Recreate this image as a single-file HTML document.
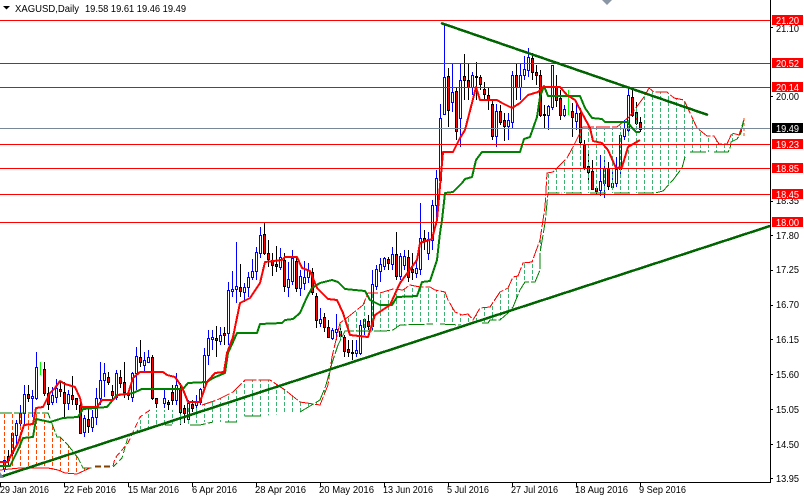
<!DOCTYPE html>
<html><head><meta charset="utf-8"><title>XAGUSD</title>
<style>
html,body{margin:0;padding:0;background:#fff;width:804px;height:497px;overflow:hidden}
svg{display:block}
text{font-family:"Liberation Sans",sans-serif;font-size:10.5px;fill:#000}
</style></head><body>
<svg width="804" height="497" viewBox="0 0 804 497" xmlns="http://www.w3.org/2000/svg">
<defs>
<pattern id="gp" width="8" height="6" patternUnits="userSpaceOnUse" x="4" y="0"><rect x="0" y="0" width="1" height="4" fill="#3cb371"/></pattern>
<pattern id="op" width="8" height="6" patternUnits="userSpaceOnUse" x="4" y="0"><rect x="0" y="0" width="1" height="4" fill="#ff4500"/></pattern>
</defs>
<rect width="804" height="497" fill="#fff"/>

<!-- wicks -->
<path fill="none" stroke="#00f" d="M4.5 456V472M12.5 432V458M16.5 420V446M20.5 405V430M24.5 385V425M32.5 390V417M36.5 352V400M52.5 387V405M56.5 379V403M68.5 390V410M84.5 415V437M92.5 410V432M96.5 388V425M100.5 362V405M104.5 363V397M116.5 370V400M132.5 372V402M136.5 347V390M144.5 352V372M148.5 350V363M164.5 388V408M176.5 373V405M188.5 400V420M196.5 395V410M200.5 388V405M204.5 348V390M208.5 330V365M212.5 330V350M220.5 327V345M228.5 282V345M232.5 271V297M236.5 242V303M244.5 283V302M248.5 272V297M252.5 259V280M256.5 247V280M260.5 227V258M280.5 248V270M288.5 262V297M292.5 250V285M300.5 270V296M304.5 261V290M308.5 263V283M320.5 308V327M332.5 328V340M336.5 314V340M356.5 340V357M360.5 320V355M364.5 319V335M372.5 270V330M376.5 265V290M380.5 258V282M384.5 257V270M392.5 247V270M400.5 253V280M404.5 250V270M416.5 260V278M420.5 203V275M428.5 232V260M432.5 200V250M436.5 170V220M440.5 104V185M444.5 24V115M452.5 63V112M460.5 63V147M472.5 72V95M496.5 104V147M508.5 113V140M512.5 71V128M520.5 63V100M524.5 56V80M528.5 48V77M548.5 105V130M552.5 65V110M564.5 105V117M576.5 103V130M600.5 155V196M604.5 158V198M612.5 170V190M616.5 157V187M620.5 135V175M624.5 120V140M628.5 89V135"/>
<path fill="none" stroke="#000" d="M8.5 450V465M28.5 385V402M44.5 362V396M48.5 387V410M60.5 382V397M64.5 382V418M72.5 376V405M76.5 398V410M80.5 400V434M88.5 409V433M108.5 372V385M112.5 385V400M120.5 370V388M124.5 362V398M128.5 390V400M140.5 340V367M152.5 355V400M156.5 398V408M168.5 400V410M172.5 385V405M180.5 383V425M184.5 405V423M192.5 400V412M216.5 326V357M224.5 327V345M240.5 264V297M264.5 223V255M268.5 240V267M272.5 253V276M276.5 246V272M284.5 253V292M296.5 257V292M312.5 268V295M316.5 293V328M324.5 313V332M328.5 320V338M340.5 325V340M344.5 335V357M348.5 340V357M352.5 340V360M368.5 315V330M388.5 257V270M396.5 232V280M408.5 250V282M412.5 253V280M424.5 230V250M448.5 68V127M456.5 87V140M464.5 54V100M468.5 63V100M476.5 62V100M480.5 75V90M484.5 82V100M488.5 88V110M492.5 100V140M500.5 105V125M504.5 113V141M516.5 63V100M532.5 53V80M536.5 65V85M540.5 70V117M544.5 105V128M556.5 75V107M560.5 90V120M572.5 103V137M580.5 108V145M584.5 140V170M588.5 152V180M592.5 160V190M596.5 188V195M608.5 162V190M632.5 88V117M636.5 102V125M640.5 117V132"/>
<path fill="none" stroke="#0f0" d="M40.5 362V375M568.5 90V115"/>
<!-- up bodies -->
<path fill="#fff" stroke="#00f" d="M3.500 460.5h2V468.5h-2zM11.5 433.5h2V453.5h-2zM15.5 423.5h2V435.5h-2zM19.5 413.5h2V423.5h-2zM23.5 394.5h2V413.5h-2zM31.5 396.5h2V398.5h-2zM35.5 367.5h2V398.5h-2zM51.5 395.5h2V402.5h-2zM55.5 388.5h2V397.5h-2zM67.5 394.5h2V403.5h-2zM83.5 418.5h2V432.5h-2zM91.5 417.5h2V427.5h-2zM95.5 398.5h2V417.5h-2zM99.5 380.5h2V398.5h-2zM103.5 373.5h2V380.5h-2zM115.5 373.5h2V397.5h-2zM131.5 373.5h2V397.5h-2zM135.5 356.5h2V373.5h-2zM143.5 360.5h2V365.5h-2zM147.5 357.5h2V362.5h-2zM163.5 398.5h2V403.5h-2zM175.5 385.5h2V400.5h-2zM187.5 403.5h2V419.5h-2zM195.5 402.5h2V405.5h-2zM199.5 389.5h2V402.5h-2zM203.5 355.5h2V387.5h-2zM207.5 338.5h2V355.5h-2zM211.5 337.5h2V339.5h-2zM219.5 335.5h2V341.5h-2zM227.5 290.5h2V333.5h-2zM231.5 289.5h2V291.5h-2zM235.5 286.5h2V289.5h-2zM243.5 287.5h2V292.5h-2zM247.5 277.5h2V287.5h-2zM251.5 271.5h2V277.5h-2zM255.5 252.5h2V271.5h-2zM259.5 235.5h2V253.5h-2zM279.5 257.5h2V267.5h-2zM287.5 279.5h2V287.5h-2zM291.5 258.5h2V281.5h-2zM299.5 276.5h2V288.5h-2zM303.5 277.5h2V283.5h-2zM307.5 270.5h2V277.5h-2zM319.5 319.5h2V323.5h-2zM331.5 330.5h2V338.5h-2zM335.5 329.5h2V332.5h-2zM355.5 350.5h2V353.5h-2zM359.5 325.5h2V353.5h-2zM363.5 319.5h2V327.5h-2zM371.5 284.5h2V326.5h-2zM375.5 269.5h2V286.5h-2zM379.5 264.5h2V271.5h-2zM383.5 258.5h2V266.5h-2zM391.5 254.5h2V264.5h-2zM399.5 256.5h2V276.5h-2zM403.5 256.5h2V265.5h-2zM415.5 268.5h2V273.5h-2zM419.5 238.5h2V269.5h-2zM427.5 239.5h2V253.5h-2zM431.5 205.5h2V240.5h-2zM435.5 178.5h2V205.5h-2zM439.5 118.5h2V180.5h-2zM443.5 77.5h2V114.5h-2zM451.5 92.5h2V102.5h-2zM459.5 80.5h2V118.5h-2zM471.5 75.5h2V87.5h-2zM495.5 111.5h2V136.5h-2zM507.5 120.5h2V126.5h-2zM511.5 75.5h2V122.5h-2zM519.5 75.5h2V87.5h-2zM523.5 69.5h2V75.5h-2zM527.5 57.5h2V70.5h-2zM547.5 106.5h2V115.5h-2zM551.5 65.5h2V107.5h-2zM563.5 109.5h2V115.5h-2zM575.5 113.5h2V121.5h-2zM599.5 181.5h2V190.5h-2zM603.5 169.5h2V183.5h-2zM611.5 183.5h2V187.5h-2zM615.5 169.5h2V183.5h-2zM619.5 135.5h2V169.5h-2zM623.5 128.5h2V136.5h-2zM627.5 95.5h2V130.5h-2z"/>
<!-- down bodies -->
<path fill="#f00" stroke="#000" d="M7.5 456.5h2V460.5h-2zM27.5 394.5h2V398.5h-2zM43.5 369.5h2V393.5h-2zM47.5 393.5h2V404.5h-2zM59.5 389.5h2V391.5h-2zM63.5 392.5h2V403.5h-2zM71.5 395.5h2V399.5h-2zM75.5 398.5h2V404.5h-2zM79.5 405.5h2V433.5h-2zM87.5 419.5h2V426.5h-2zM107.5 377.5h2V382.5h-2zM111.5 391.5h2V395.5h-2zM119.5 377.5h2V383.5h-2zM123.5 382.5h2V392.5h-2zM127.5 393.5h2V395.5h-2zM139.5 357.5h2V362.5h-2zM151.5 357.5h2V398.5h-2zM155.5 398.5h2V403.5h-2zM167.5 402.5h2V404.5h-2zM171.5 392.5h2V400.5h-2zM179.5 388.5h2V412.5h-2zM183.5 408.5h2V413.5h-2zM191.5 404.5h2V408.5h-2zM215.5 338.5h2V340.5h-2zM223.5 333.5h2V335.5h-2zM239.5 287.5h2V291.5h-2zM263.5 234.5h2V253.5h-2zM267.5 253.5h2V259.5h-2zM271.5 260.5h2V265.5h-2zM275.5 264.5h2V266.5h-2zM283.5 260.5h2V286.5h-2zM295.5 261.5h2V288.5h-2zM311.5 272.5h2V292.5h-2zM315.5 296.5h2V320.5h-2zM323.5 317.5h2V327.5h-2zM327.5 327.5h2V337.5h-2zM339.5 331.5h2V336.5h-2zM343.5 337.5h2V351.5h-2zM347.5 349.5h2V352.5h-2zM351.5 352.5h2V353.5h-2zM367.5 321.5h2V326.5h-2zM387.5 259.5h2V263.5h-2zM395.5 254.5h2V276.5h-2zM407.5 257.5h2V277.5h-2zM411.5 269.5h2V272.5h-2zM423.5 238.5h2V241.5h-2zM447.5 76.5h2V110.5h-2zM455.5 91.5h2V131.5h-2zM463.5 76.5h2V80.5h-2zM467.5 80.5h2V87.5h-2zM475.5 76.5h2V77.5h-2zM479.5 77.5h2V84.5h-2zM483.5 89.5h2V94.5h-2zM487.5 95.5h2V100.5h-2zM491.5 104.5h2V136.5h-2zM499.5 111.5h2V122.5h-2zM503.5 120.5h2V126.5h-2zM515.5 75.5h2V87.5h-2zM531.5 58.5h2V72.5h-2zM535.5 72.5h2V75.5h-2zM539.5 75.5h2V115.5h-2zM543.5 114.5h2V115.5h-2zM555.5 87.5h2V100.5h-2zM559.5 98.5h2V115.5h-2zM571.5 111.5h2V117.5h-2zM579.5 113.5h2V142.5h-2zM583.5 145.5h2V167.5h-2zM587.5 166.5h2V172.5h-2zM591.5 171.5h2V189.5h-2zM595.5 188.5h2V191.5h-2zM607.5 168.5h2V186.5h-2zM631.5 97.5h2V115.5h-2zM635.5 112.5h2V123.5h-2zM639.5 122.5h2V129.5h-2z"/>

<!-- cloud fills -->
<path fill="url(#op)" d="M0 413L42 413L48 413L57 437L60 437L68 445L78 458L83 468L92 468L90 468L77 474L65 473L58 470L48 469L42 468L20 468L0 470Z"/>
<path fill="url(#gp)" d="M115 458L128 443L140 417L150 410L178 410L202 405L217 400L233 392L245 380L270 380L285 390L300 402L320 405L328 385L332 363L332 363L326 385L320 400L300 412L263 416L245 416L237 422L200 422L190 425L165 425L138 430L128 437L122 458Z"/>
<path fill="url(#gp)" d="M332 357L340 323L348 317L363 305L368 293L380 293L393 289L403 290L410 285L420 287L430 287L435 290L445 292L448 300L455 312L462 315L468 314L473 320L480 308L490 307L500 292L508 288L513 277L518 276L523 263L532 262L540 240L545 207L547 193L548 197L545 223L540 253L540 270L535 282L525 282L520 290L513 307L508 313L500 320L490 320L488 323L460 325L433 324L400 325L393 330L385 331L345 331L338 345Z"/>
<path fill="url(#gp)" d="M547 173L553 172L558 167L567 158L573 147L583 127L604 128L617 128L629 117L644 97L649 88L654 92L667 92L674 98L684 100L691 115L697 128L707 136L714 136L719 144L727 144L732 133L739 135L744 120L741 133L737 139L731 142L730 149L728 152L690 152L685 157L682 168L673 180L663 191L655 193L548 193Z"/>

<!-- senkou lines -->
<g fill="none" stroke-width="1" shape-rendering="crispEdges">
<path stroke="#008000" d="M0 413H48L57 437L60 437L68 445L78 458L83 468L92 468" stroke-dasharray="12 2"/>
<path stroke="#f00" d="M0 470L20 468H48L58 470L65 473L77 474L90 468"/>
<path stroke="#f00" d="M95 466H113L115 458L128 443L140 417L150 410" stroke-dasharray="6 3"/>
<path stroke="#008000" d="M95 467H113L122 458L128 437L138 430" stroke-dasharray="6 3"/>
<path stroke="#f00" d="M150 410M202 405L217 400L233 392L245 380H270L285 390L300 402L320 405L328 385L332 357L340 323L348 317L363 305L368 293H380L393 289L403 290L410 285L420 287H430L435 290L445 292L448 300L455 312L462 315L468 314L473 320L480 308L490 307L500 292L508 288L513 277L518 276L523 263L532 262L540 240L545 207L547 173L553 172L558 167L567 158L573 147L583 127H617L629 117L644 97L649 88L654 92H667L674 98L684 100L691 115L697 128L707 136H714L719 144H727L732 133L739 135L744 120" stroke-dasharray="14 2"/>
<path stroke="#008000" d="M165 425H172M190 425H200L213 422M225 422H237M245 416H263M300 412L320 400L326 385L332 363L338 345L345 331H385L393 330L400 325L433 324M440 324L460 325M482 323L488 323L490 320H500L508 313L513 307L520 290L525 282H535L540 270L540 253L545 223L548 193H562M566 193H584M590 193H608M614 193H632M638 193H655L663 191L673 180L682 168L685 157M690 152H708M714 152H728L730 149L731 142L737 139L741 133L744 118" stroke-dasharray="16 2"/>
<path stroke="#ff4500" d="M744 118V136" stroke-dasharray="3 2"/>
</g>

<!-- horizontal levels -->
<path stroke="#778899" fill="none" d="M0 128.5H770"/>
<path stroke="#f00" fill="none" d="M0 20.5H770M0 63.5H770M0 87.5H770M0 144.5H770M0 168.5H770M0 194.5H770M0 222.5H770"/>

<!-- kijun / tenkan -->
<g fill="none" shape-rendering="crispEdges" stroke-linejoin="round">
<path stroke="#008000" stroke-width="2" d="M0 466L10 466L18 450L23 438L33 437L36 419L50 422L63 418L78 417L83 409L107 407L117 395L133 393L142 389L183 389L188 383L207 382L213 378L225 373L228 353L233 342L237 333L257 333L260 324L282 323L285 320L293 319L300 313L307 297L312 288L320 283L332 280L338 282L345 289L365 291L370 300L380 305L392 305L397 297L417 296L422 282L430 281L437 260L440 233L442 220L445 193L453 192L462 183L465 179L472 177L476 160L482 152L520 152L524 139L530 137L537 117L540 97L544 86L548 96L580 96L585 108L592 118L602 119L605 122L627 122L636 132L640 132"/>
<path stroke="#f00" stroke-width="2" d="M0 462L8 462L10 457L13 452L18 443L24 425L33 424L36 408L43 407L50 393L55 388L60 381L65 384L75 387L80 398L82 407L97 407L102 400L113 400L118 395L128 394L133 378L140 372L163 372L167 375L175 377L182 387L188 402L200 402L207 382L215 373L224 372L227 353L233 337L240 303L250 298L260 283L265 262L282 260L285 257L297 257L302 268L310 271L317 288L328 299L337 300L343 313L350 335L368 337L375 315L390 305L400 283L417 260L420 243L432 239L437 220L443 152L453 152L460 138L465 130L472 103L476 87L480 100L497 100L502 103L512 108L520 103L528 95L538 92L543 87L560 87L567 95L575 100L583 115L590 128L593 141L602 143L608 150L616 168L622 167L628 147L640 140"/>
</g>

<!-- trend lines -->
<g fill="none" stroke="#006400" stroke-width="2.5" shape-rendering="crispEdges">
<path d="M0 477L770 226"/>
<path d="M441 23L708 115"/>
</g>

<!-- axes -->
<path fill="none" stroke="#000" d="M770.5 0V482.5H0M770 27.5h3M770 96.5h3M770 201.5h3M770 235.5h3M770 270.5h3M770 305.5h3M770 339.5h3M770 374.5h3M770 409.5h3M770 444.5h3M770 478.5h3M0.5 483V487M64.5 483V487M128.5 483V487M192.5 483V487M256.5 483V487M320.5 483V487M384.5 483V487M448.5 483V487M512.5 483V487M576.5 483V487M640.5 483V487"/>
<g>
<text x="776" y="32" textLength="23" lengthAdjust="spacingAndGlyphs">21.10</text>
<text x="776" y="100" textLength="23" lengthAdjust="spacingAndGlyphs">20.00</text>
<text x="776" y="204" textLength="23" lengthAdjust="spacingAndGlyphs">18.35</text>
<text x="776" y="239" textLength="23" lengthAdjust="spacingAndGlyphs">17.80</text>
<text x="776" y="273" textLength="23" lengthAdjust="spacingAndGlyphs">17.25</text>
<text x="776" y="308" textLength="23" lengthAdjust="spacingAndGlyphs">16.70</text>
<text x="776" y="343" textLength="23" lengthAdjust="spacingAndGlyphs">16.15</text>
<text x="776" y="378" textLength="23" lengthAdjust="spacingAndGlyphs">15.60</text>
<text x="776" y="413" textLength="23" lengthAdjust="spacingAndGlyphs">15.05</text>
<text x="776" y="448" textLength="23" lengthAdjust="spacingAndGlyphs">14.50</text>
<text x="776" y="482" textLength="23" lengthAdjust="spacingAndGlyphs">13.95</text>
</g>
<!-- price tags -->
<g fill="#f00">
<rect x="772" y="15" width="31" height="10"/>
<rect x="772" y="58" width="31" height="10"/>
<rect x="772" y="82" width="31" height="10"/>
<rect x="772" y="139" width="31" height="10"/>
<rect x="772" y="163" width="31" height="10"/>
<rect x="772" y="189" width="31" height="10"/>
<rect x="772" y="217" width="31" height="10"/>
<rect x="772" y="123" width="31" height="10" fill="#000"/>
</g>
<g>
<text x="776" y="24" textLength="23" lengthAdjust="spacingAndGlyphs" style="fill:#fff">21.20</text>
<text x="776" y="67" textLength="23" lengthAdjust="spacingAndGlyphs" style="fill:#fff">20.52</text>
<text x="776" y="91" textLength="23" lengthAdjust="spacingAndGlyphs" style="fill:#fff">20.14</text>
<text x="776" y="132" textLength="23" lengthAdjust="spacingAndGlyphs" style="fill:#fff">19.49</text>
<text x="776" y="148" textLength="23" lengthAdjust="spacingAndGlyphs" style="fill:#fff">19.23</text>
<text x="776" y="172" textLength="23" lengthAdjust="spacingAndGlyphs" style="fill:#fff">18.85</text>
<text x="776" y="198" textLength="23" lengthAdjust="spacingAndGlyphs" style="fill:#fff">18.45</text>
<text x="776" y="226" textLength="23" lengthAdjust="spacingAndGlyphs" style="fill:#fff">18.00</text>
</g>
<!-- dates -->
<text x="0" y="493" textLength="49" lengthAdjust="spacingAndGlyphs">29 Jan 2016</text>
<text x="64" y="493" textLength="52" lengthAdjust="spacingAndGlyphs">22 Feb 2016</text>
<text x="128" y="493" textLength="51" lengthAdjust="spacingAndGlyphs">15 Mar 2016</text>
<text x="192" y="493" textLength="45" lengthAdjust="spacingAndGlyphs">6 Apr 2016</text>
<text x="255" y="493" textLength="51" lengthAdjust="spacingAndGlyphs">28 Apr 2016</text>
<text x="319" y="493" textLength="55" lengthAdjust="spacingAndGlyphs">20 May 2016</text>
<text x="383" y="493" textLength="50" lengthAdjust="spacingAndGlyphs">13 Jun 2016</text>
<text x="447" y="493" textLength="42" lengthAdjust="spacingAndGlyphs">5 Jul 2016</text>
<text x="511" y="493" textLength="47" lengthAdjust="spacingAndGlyphs">27 Jul 2016</text>
<text x="575" y="493" textLength="53" lengthAdjust="spacingAndGlyphs">18 Aug 2016</text>
<text x="639" y="493" textLength="47" lengthAdjust="spacingAndGlyphs">9 Sep 2016</text>
<!-- header -->
<path d="M3 6h7l-3.500 3.500z" fill="#000"/>
<text x="15" y="12" textLength="64" lengthAdjust="spacingAndGlyphs">XAGUSD,Daily</text>
<text x="85" y="12" textLength="101" lengthAdjust="spacingAndGlyphs">19.58 19.61 19.46 19.49</text>
<!-- small grey markers -->
<path d="M602 0h10l-5 5z" fill="#8a96a3"/>
<path d="M0 472l4 6h-4z" fill="#778899"/>
</svg>
</body></html>
